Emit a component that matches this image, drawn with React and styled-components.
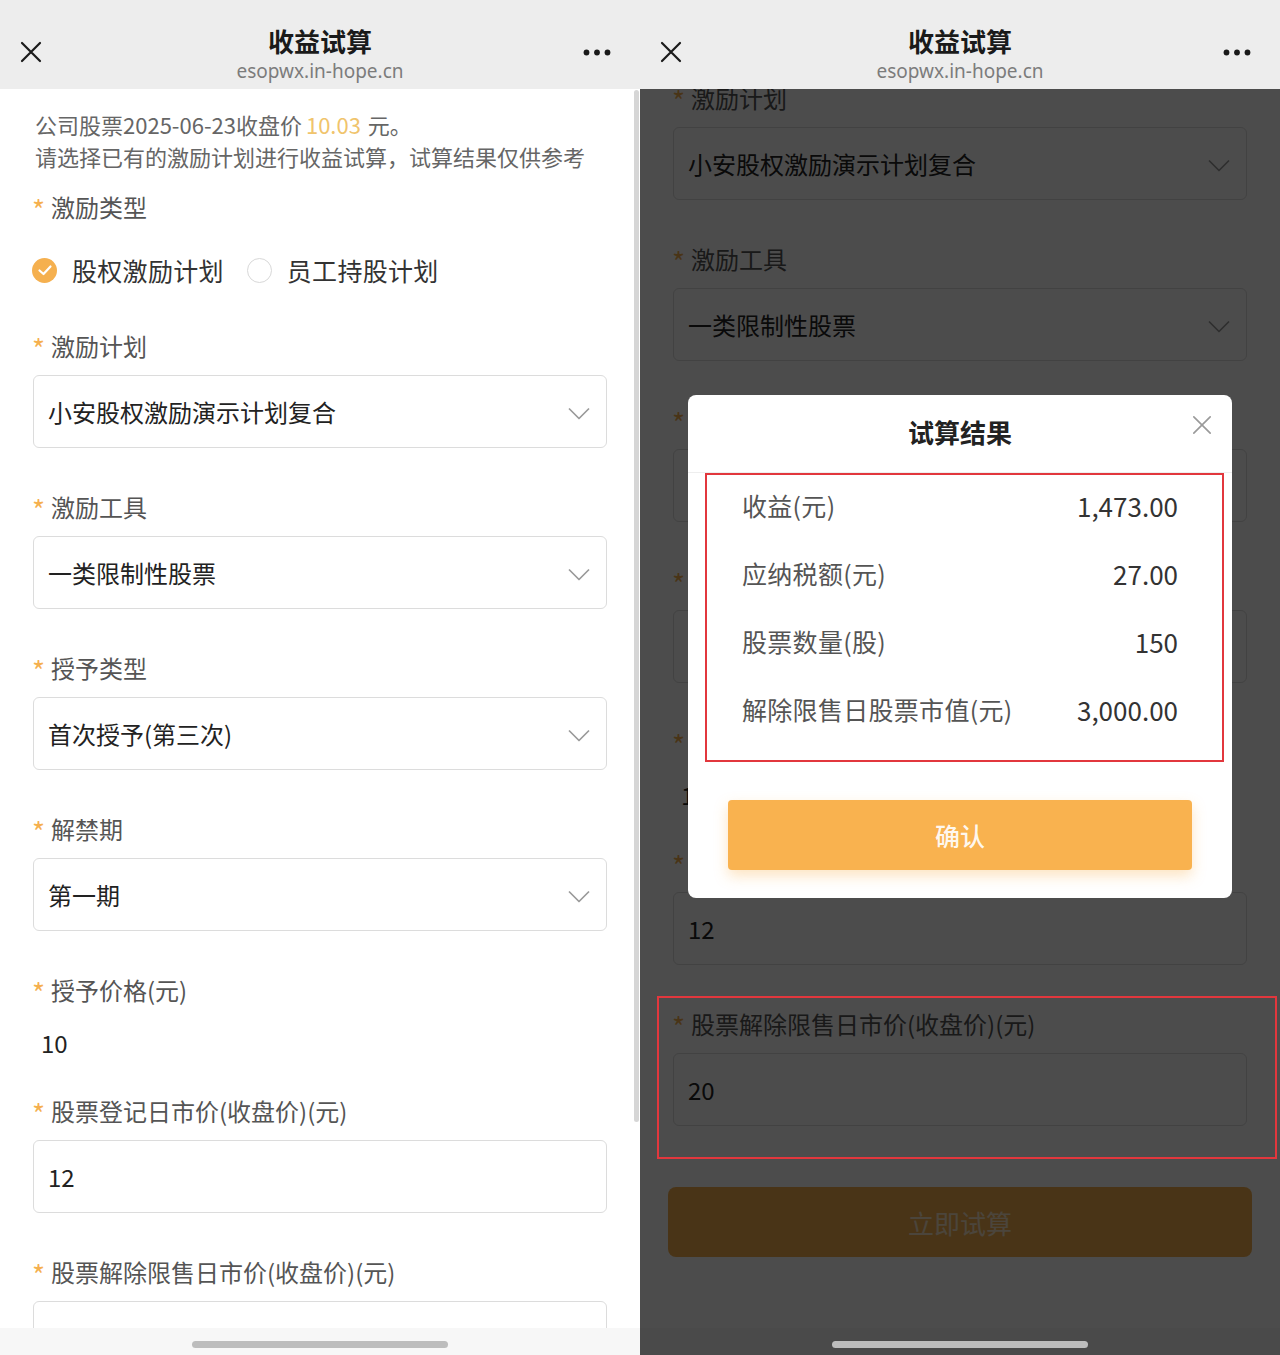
import React from 'react';
import styled, { createGlobalStyle } from 'styled-components';

const GlobalStyle = createGlobalStyle`
  html, body { margin: 0; padding: 0; background: #fff; }
  body { font-family: "Noto Sans CJK SC", "Noto Sans", sans-serif; color: #222; }
  * { box-sizing: border-box; }
`;

const Screen = styled.div`
  display: flex;
  width: 1280px;
  height: 1355px;
  overflow: hidden;
`;

const Phone = styled.div`
  position: relative;
  width: 640px;
  height: 1355px;
  flex: none;
  display: flex;
  flex-direction: column;
  background: #fff;
  overflow: hidden;
`;

const Header = styled.header`
  height: 89px;
  flex: none;
  background: #ededed;
  display: flex;
  align-items: flex-start;
  padding-top: 25px;
  position: relative;
  z-index: 2;
`;

const HeaderSide = styled.div`
  width: 90px;
  display: flex;
  justify-content: ${(p) => (p.$right ? 'flex-end' : 'flex-start')};
  padding: ${(p) => (p.$right ? '24px 29px 0 0' : '16px 0 0 20px')};
`;

const TitleBlock = styled.div`
  flex: 1;
  display: flex;
  flex-direction: column;
  align-items: center;
`;

const Title = styled.div`
  font-size: 26px;
  line-height: 32px;
  font-weight: 700;
  color: #1a1a1a;
`;

const Url = styled.div`
  font-family: "Noto Sans", sans-serif;
  font-size: 19px;
  line-height: 28px;
  color: #7c7c7c;
`;

const Viewport = styled.div`
  flex: 1;
  overflow: hidden;
  position: relative;
`;

const Form = styled.div`
  padding: 0 33px;
  margin-top: ${(p) => -(p.$scroll || 0)}px;
`;

const Intro = styled.div`
  padding: 19px 0 0 2px;
  font-size: 22px;
  line-height: 32px;
  color: #666;
`;

const Price = styled.span`
  color: #f0c46c;
  margin-left: 4px;
  margin-right: 2px;
`;

const Field = styled.div`
  margin-top: ${(p) => p.$top}px;
`;

const Label = styled.div`
  display: flex;
  align-items: center;
  height: 32px;
  font-size: 24px;
  line-height: 32px;
  color: #555;
`;

const Star = styled.span`
  width: 18px;
  flex: none;
  font-size: 28px;
  line-height: 32px;
  color: #f5b04f;
  position: relative;
  top: 2px;
  left: -1px;
`;

const Box = styled.div`
  margin-top: 13px;
  height: 73px;
  border: 1px solid #dcdcdc;
  border-radius: 6px;
  padding: 0 16px 0 14px;
  display: flex;
  align-items: center;
  justify-content: space-between;
  font-size: 24px;
  color: #222;
  background: #fff;
`;

const ChevronSlot = styled.span`
  display: flex;
  margin-top: 4px;
`;

const PlainValue = styled.div`
  margin-top: 13px;
  height: 46px;
  padding-left: 8px;
  display: flex;
  align-items: center;
  font-size: 24px;
  color: #222;
`;

const RadioRow = styled.div`
  margin-top: 17px;
  height: 60px;
  display: flex;
  align-items: center;
  gap: 23px;
  margin-left: -1px;
`;

const RadioOption = styled.div`
  display: flex;
  align-items: center;
  gap: 15px;
  font-size: 25px;
  letter-spacing: 0.3px;
  color: #333;
`;

const RadioDot = styled.span`
  width: 25px;
  height: 25px;
  border-radius: 50%;
  flex: none;
  display: flex;
  align-items: center;
  justify-content: center;
  background: ${(p) => (p.$on ? '#f5b04f' : '#fff')};
  border: ${(p) => (p.$on ? 'none' : '1.5px solid #d8d8d8')};
`;

const SubmitButton = styled.div`
  margin: 61px -5px 40px;
  height: 70px;
  border-radius: 8px;
  background: #f5b04f;
  display: flex;
  align-items: center;
  justify-content: center;
  font-size: 26px;
  color: rgba(255, 255, 255, 0.7);
`;

const BottomBar = styled.div`
  height: 27px;
  flex: none;
  background: #f7f7f7;
  display: flex;
  justify-content: center;
`;

const HomeIndicator = styled.div`
  position: relative;
  z-index: 6;
  margin-top: 13px;
  width: 256px;
  height: 7px;
  border-radius: 4px;
  background: #bdbdbd;
`;

const ScrollThumb = styled.div`
  position: absolute;
  right: 1px;
  top: 1px;
  width: 5px;
  height: 1032px;
  border-radius: 3px;
  background: #d6d6d6;
`;

const Overlay = styled.div`
  position: absolute;
  left: 0;
  right: 0;
  top: 89px;
  bottom: 0;
  background: rgba(0, 0, 0, 0.7);
  z-index: 3;
`;

const Modal = styled.div`
  position: absolute;
  top: 395px;
  left: 48px;
  width: 544px;
  background: #fff;
  border-radius: 8px;
  z-index: 5;
`;

const ModalHeader = styled.div`
  position: relative;
  height: 78px;
  border-bottom: 1px solid #eeeeee;
  display: flex;
  align-items: center;
  justify-content: center;
  padding-bottom: 4px;
  font-size: 26px;
  font-weight: 600;
  color: #222;
`;

const ModalClose = styled.div`
  position: absolute;
  right: 20px;
  top: 20px;
  width: 20px;
  height: 20px;
  display: flex;
`;

const ResultBox = styled.div`
  margin: 0 8px 0 17px;
  border: 2px solid #e2373d;
  padding: 0 44px 13px 35px;
`;

const ResultRow = styled.div`
  height: 68px;
  padding-bottom: 8px;
  display: flex;
  align-items: center;
  justify-content: space-between;
`;

const ResultLabel = styled.span`
  font-size: 25px;
  letter-spacing: 0.3px;
  color: #555;
`;

const ResultValue = styled.span`
  font-size: 26px;
  color: #333;
`;

const ConfirmButton = styled.div`
  margin: 38px 40px 28px;
  height: 70px;
  border-radius: 4px;
  background: #f9b24f;
  box-shadow: 0 6px 14px rgba(249, 178, 79, 0.35);
  display: flex;
  align-items: center;
  justify-content: center;
  font-size: 25px;
  font-weight: 500;
  color: rgba(255, 255, 255, 0.92);
`;

const Annotation = styled.div`
  position: absolute;
  left: 17px;
  top: 996px;
  width: 620px;
  height: 163px;
  border: 2px solid #e2373d;
  z-index: 4;
`;

const CloseIcon = ({ size = 22, color = '#1a1a1a', w = 2.2 }) => (
  <svg width={size} height={size} viewBox="0 0 22 22">
    <path d="M2 2 L20 20 M20 2 L2 20" stroke={color} strokeWidth={w} strokeLinecap="round" fill="none" />
  </svg>
);

const Dots = () => (
  <svg width="28" height="7" viewBox="0 0 28 7">
    <circle cx="3.5" cy="3.5" r="2.9" fill="#1a1a1a" />
    <circle cx="14" cy="3.5" r="2.9" fill="#1a1a1a" />
    <circle cx="24.5" cy="3.5" r="2.9" fill="#1a1a1a" />
  </svg>
);

const Chevron = () => (
  <svg width="22" height="13" viewBox="0 0 22 13">
    <path d="M1 1.5 L11 11.5 L21 1.5" stroke="#9a9a9a" strokeWidth="1.7" fill="none" strokeLinejoin="round" />
  </svg>
);

const Check = () => (
  <svg width="16" height="14" viewBox="0 0 16 14">
    <path d="M2.5 7.5 L6.5 11 L13.5 3.5" stroke="#fff" strokeWidth="2.2" fill="none" strokeLinecap="round" strokeLinejoin="round" />
  </svg>
);

const TopBar = () => (
  <Header>
    <HeaderSide>
      <CloseIcon />
    </HeaderSide>
    <TitleBlock>
      <Title>收益试算</Title>
      <Url>esopwx.in-hope.cn</Url>
    </TitleBlock>
    <HeaderSide $right>
      <Dots />
    </HeaderSide>
  </Header>
);

const FieldLabel = ({ children }) => (
  <Label>
    <Star>*</Star>
    {children}
  </Label>
);

const SelectField = ({ top, label, value }) => (
  <Field $top={top}>
    <FieldLabel>{label}</FieldLabel>
    <Box>
      <span>{value}</span>
      <ChevronSlot>
        <Chevron />
      </ChevronSlot>
    </Box>
  </Field>
);

const InputField = ({ top, label, value }) => (
  <Field $top={top}>
    <FieldLabel>{label}</FieldLabel>
    <Box>{value}</Box>
  </Field>
);

const CalcForm = ({ scroll, lastValue }) => (
  <Form $scroll={scroll}>
    <Intro>
      公司股票2025-06-23收盘价<Price>10.03</Price> 元。
      <br />
      请选择已有的激励计划进行收益试算，试算结果仅供参考
    </Intro>
    <Field $top={19}>
      <FieldLabel>激励类型</FieldLabel>
      <RadioRow>
        <RadioOption>
          <RadioDot $on>
            <Check />
          </RadioDot>
          股权激励计划
        </RadioOption>
        <RadioOption>
          <RadioDot />
          员工持股计划
        </RadioOption>
      </RadioRow>
    </Field>
    <SelectField top={30} label="激励计划" value="小安股权激励演示计划复合" />
    <SelectField top={43} label="激励工具" value="一类限制性股票" />
    <SelectField top={43} label="授予类型" value="首次授予(第三次)" />
    <SelectField top={43} label="解禁期" value="第一期" />
    <Field $top={43}>
      <FieldLabel>授予价格(元)</FieldLabel>
      <PlainValue>10</PlainValue>
    </Field>
    <InputField top={30} label="股票登记日市价(收盘价)(元)" value="12" />
    <InputField top={43} label="股票解除限售日市价(收盘价)(元)" value={lastValue} />
    <SubmitButton>立即试算</SubmitButton>
  </Form>
);

const results = [
  ['收益(元)', '1,473.00'],
  ['应纳税额(元)', '27.00'],
  ['股票数量(股)', '150'],
  ['解除限售日股票市值(元)', '3,000.00'],
];

export default function App() {
  return (
    <>
      <GlobalStyle />
      <Screen>
        <Phone>
          <TopBar />
          <Viewport>
            <CalcForm scroll={0} lastValue="" />
            <ScrollThumb />
          </Viewport>
          <BottomBar>
            <HomeIndicator />
          </BottomBar>
        </Phone>
        <Phone>
          <TopBar />
          <Viewport>
            <CalcForm scroll={248} lastValue="20" />
          </Viewport>
          <BottomBar>
            <HomeIndicator />
          </BottomBar>
          <Overlay />
          <Annotation />
          <Modal>
            <ModalHeader>
              试算结果
              <ModalClose>
                <CloseIcon size={20} color="#9a9a9a" w={1.8} />
              </ModalClose>
            </ModalHeader>
            <ResultBox>
              {results.map(([k, v]) => (
                <ResultRow key={k}>
                  <ResultLabel>{k}</ResultLabel>
                  <ResultValue>{v}</ResultValue>
                </ResultRow>
              ))}
            </ResultBox>
            <ConfirmButton>确认</ConfirmButton>
          </Modal>
        </Phone>
      </Screen>
    </>
  );
}
